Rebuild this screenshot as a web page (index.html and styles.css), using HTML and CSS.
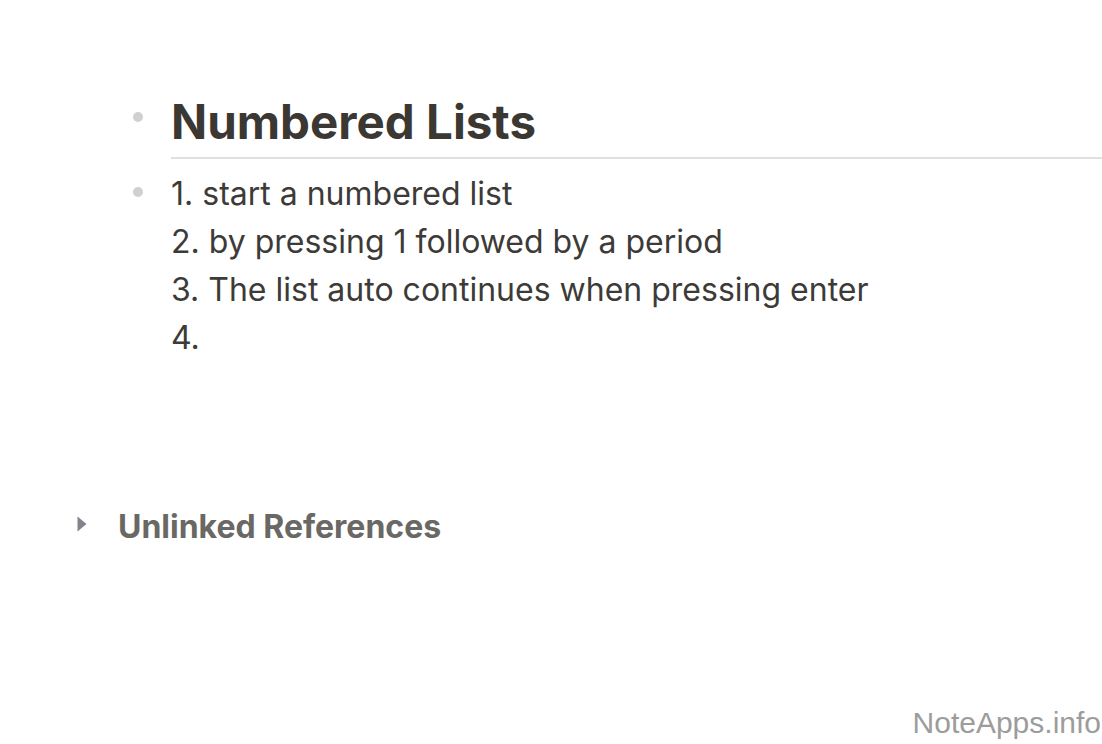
FILE: index.html
```html
<!DOCTYPE html>
<html>
<head>
<meta charset="utf-8">
<link rel="stylesheet" href="styles.css">
</head>
<body>
<div class="page">
  <div class="block title-block">
    <span class="bullet"></span>
    <div class="content">
      <h1 class="title">Numbered Lists</h1>
    </div>
  </div>
  <div class="block list-block">
    <span class="bullet"></span>
    <div class="content">
      <div class="line">1. start a numbered list</div>
      <div class="line">2. by pressing 1 followed by a period</div>
      <div class="line">3. The list auto continues when pressing enter</div>
      <div class="line">4.</div>
    </div>
  </div>
  <div class="refs">
    <svg class="caret" width="10" height="16" viewBox="0 0 10 16"><path d="M0.5 0.5 L9.5 8 L0.5 15.5 Z" fill="#83838b"/></svg>
    <span class="refs-label">Unlinked References</span>
  </div>
</div>
<div class="watermark">NoteApps.info</div>
</body>
</html>
```
FILE: styles.css
```css
html, body {
  margin: 0;
  padding: 0;
  background: #ffffff;
}
body {
  width: 1102px;
  height: 744px;
  overflow: hidden;
  position: relative;
  font-family: Inter, "Noto Sans", sans-serif;
}
.page {
  padding-top: 94px;
}
.block {
  display: flex;
  align-items: flex-start;
  padding-left: 133px;
}
.bullet {
  flex: none;
  width: 10px;
  height: 10px;
  border-radius: 50%;
  background: #d0d0d0;
  margin-right: 28px;
}
.content {
  flex: 1;
}
.title-block .bullet {
  margin-top: 18px;
}
.title {
  margin: 0;
  font-size: 47.5px;
  font-weight: 700;
  color: #3b3833;
  line-height: 56px;
  padding-bottom: 7px;
  border-bottom: 2px solid #e0e0e0;
}
.list-block {
  margin-top: 11px;
}
.list-block .bullet {
  margin-top: 17px;
}
.line {
  font-size: 32px;
  line-height: 48px;
  color: #3d3b38;
}
.refs {
  display: flex;
  align-items: flex-start;
  padding-left: 77px;
  margin-top: 141px;
}
.caret {
  flex: none;
  margin-top: 13px;
  margin-right: 31px;
}
.refs-label {
  font-size: 32px;
  line-height: 48px;
  font-weight: 700;
  color: #6a6864;
}
.watermark {
  position: absolute;
  right: 1px;
  bottom: 4px;
  font-family: "Liberation Sans", Arial, sans-serif;
  font-size: 30px;
  line-height: 34px;
  color: #9c9c9c;
}
```
